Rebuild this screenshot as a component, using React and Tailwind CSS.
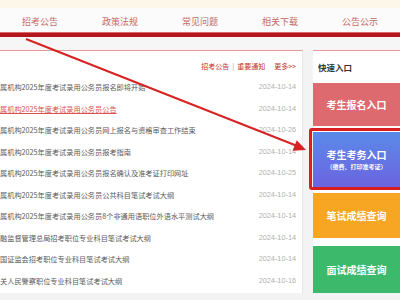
const news = [
  { t: "属机构2025年度考试录用公务员报名即将开始", d: "2024-10-14" },
  { t: "属机构2025年度考试录用公务员公告", d: "2024-10-14", hot: true },
  { t: "属机构2025年度考试录用公务员网上报名与资格审查工作结束", d: "2024-10-26" },
  { t: "属机构2025年度考试录用公务员报考指南", d: "2024-10-14" },
  { t: "属机构2025年度考试录用公务员报名确认及准考证打印网址", d: "2024-10-25" },
  { t: "属机构2025年度考试录用公务员公共科目笔试考试大纲", d: "2024-10-14" },
  { t: "属机构2025年度考试录用公务员8个非通用语职位外语水平测试大纲", d: "2024-10-14" },
  { t: "融监督管理总局招考职位专业科目笔试考试大纲", d: "2024-10-14" },
  { t: "国证监会招考职位专业科目笔试考试大纲", d: "2024-10-14" },
  { t: "关人民警察职位专业科目笔试考试大纲", d: "2024-10-16" },
];

const nav = ["招考公告", "政策法规", "常见问题", "相关下载", "公告公示"];

export default function App() {
  return (
    <div
      className="relative w-[400px] h-[300px] overflow-hidden bg-[#f3f3f3]"
      style={{ fontFamily: '"Noto Sans CJK SC", "Noto Sans", sans-serif' }}
    >
      <div className="h-[8px] bg-[#fdf7ea]" />
      <div className="h-[24px] grid grid-cols-5 bg-[#fbfbfb]">
        {nav.map((n) => (
          <div key={n} className="flex items-center justify-center text-[9px] text-[#c46a68] pt-[3px]">
            {n}
          </div>
        ))}
      </div>
      <div className="h-[5px] bg-[#b3171d] border-t border-[#d86a6a]" />
      <div className="h-[13px] bg-[#f6f6f6]" />

      <div className="flex gap-[10px] h-[243px]">
        {/* left news */}
        <div className="w-[303px] bg-white border-t border-[#e39a9a] border-r border-r-[#e6e6e6] overflow-hidden">
          <div className="h-[26px] flex items-end justify-end pr-[6px] pb-[6px] text-[7px] text-[#c4302b]">
            <span>招考公告</span>
            <span className="mx-[3px] text-[#999]">|</span>
            <span>重要通知</span>
            <span className="ml-[9px]">更多&gt;&gt;</span>
          </div>
          <div>
            {news.map((n, i) => (
              <div key={i} className="h-[21.5px] flex items-center justify-between pr-[6px]">
                <span
                  className={
                    n.hot
                      ? "text-[7.2px] text-[#d9534f] underline whitespace-nowrap"
                      : "text-[7.2px] text-[#5a5a5a] whitespace-nowrap"
                  }
                >
                  {n.t}
                </span>
                <span className="text-[7.3px] text-[#b0b0b0]" style={{ fontFamily: '"Liberation Sans", sans-serif' }}>
                  {n.d}
                </span>
              </div>
            ))}
          </div>
        </div>

        {/* right quick entry */}
        <div className="flex-1 bg-white border-t border-[#e39a9a]">
          <div className="h-[32px] flex items-center pl-[5px] text-[8.5px] font-bold text-[#333]">快速入口</div>
          <div className="flex flex-col">
            <div className="h-[43px] bg-[#dc6a6e] flex items-center justify-center text-white text-[10px] font-bold">
              考生报名入口
            </div>
            <div className="relative mt-[6px] h-[55px] bg-gradient-to-b from-[#5a8ae9] to-[#6a63df] flex flex-col items-center justify-center text-white">
              <div className="text-[10px] font-bold leading-[14px]">考生考务入口</div>
              <div className="text-[6px] font-bold leading-[9px]">（缴费、打印准考证）</div>
              <div className="absolute -left-[4px] -top-[4px] -right-[6px] -bottom-[3px] border-[3px] border-[#d81e1e] rounded-[3px]" />
            </div>
            <div className="mt-[6px] h-[45px] bg-[#f7a624] flex items-center justify-center text-white text-[10px] font-bold">
              笔试成绩查询
            </div>
            <div className="mt-[8px] h-[47px] bg-[#3cb96b] flex items-center justify-center text-white text-[10px] font-bold">
              面试成绩查询
            </div>
          </div>
        </div>
      </div>

      {/* red arrow */}
      <svg className="absolute left-0 top-0 pointer-events-none" width="400" height="300">
        <line x1="26" y1="39" x2="296" y2="145.5" stroke="#d82222" strokeWidth="2" />
        <polygon points="306,150 292.5,150.8 296.8,140.2" fill="#d82222" />
      </svg>
    </div>
  );
}
